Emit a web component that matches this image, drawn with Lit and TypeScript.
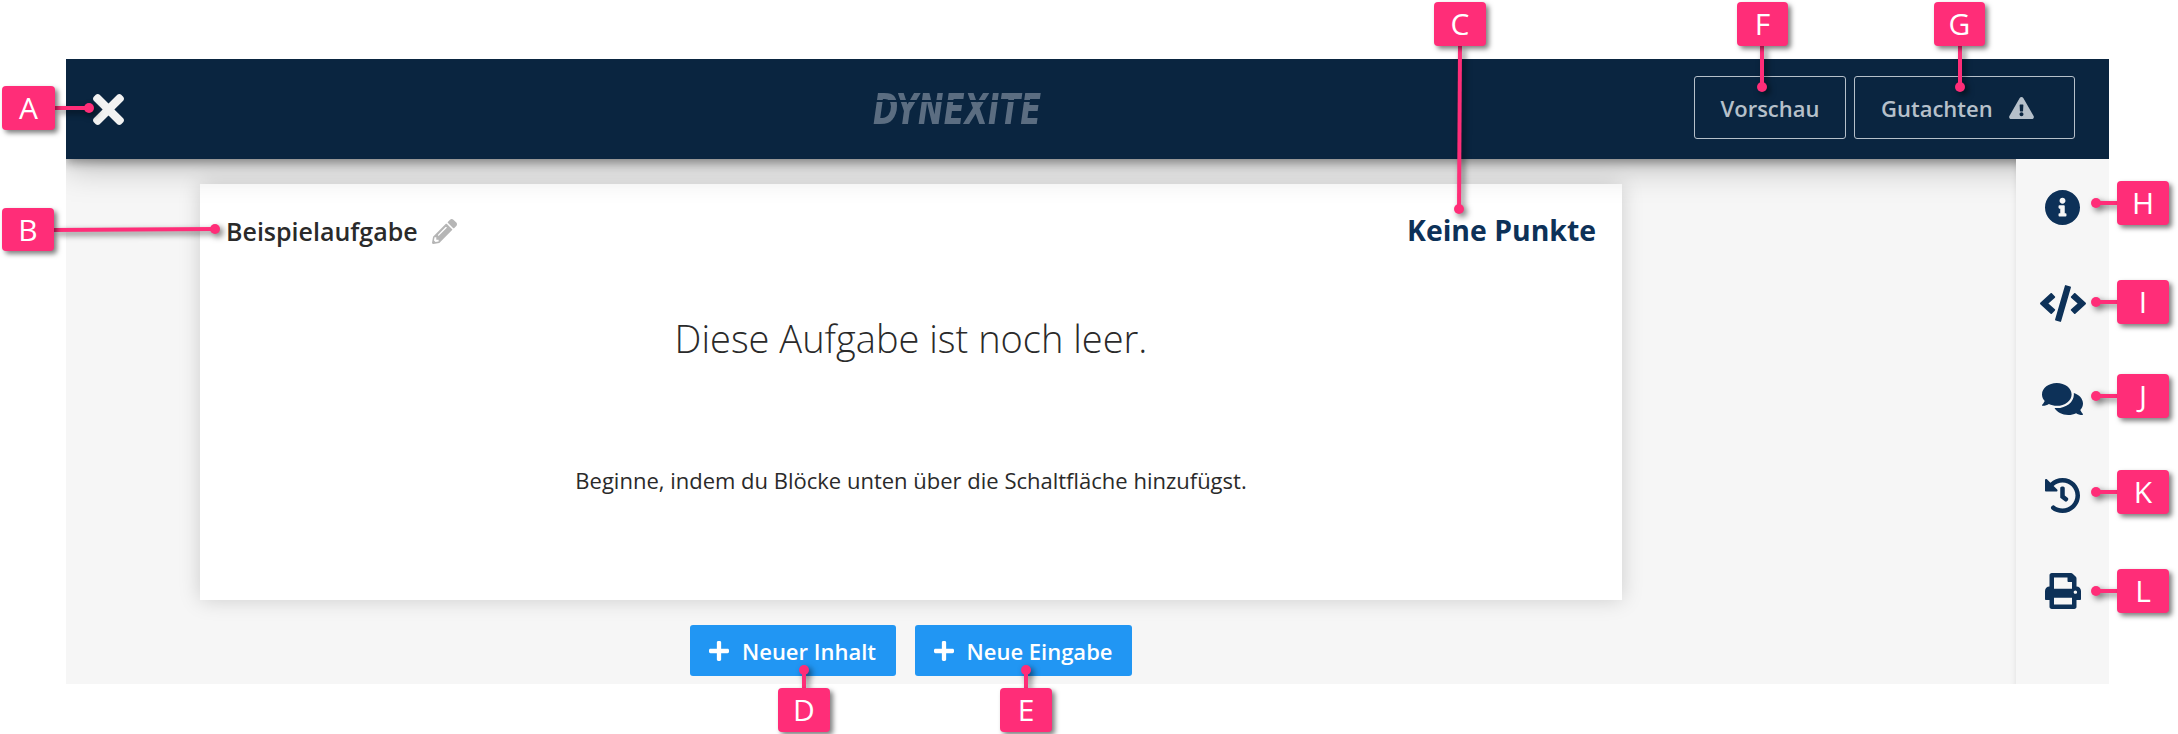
import { LitElement, html, css, svg } from "lit";
import { customElement } from "lit/decorators.js";

const P = {
  times: "M242.72 256l100.07-100.07c12.28-12.28 12.28-32.19 0-44.48l-22.24-22.24c-12.28-12.28-32.19-12.28-44.48 0L176 189.28 75.93 89.21c-12.28-12.28-32.19-12.28-44.48 0L9.21 111.45c-12.28 12.28-12.28 32.19 0 44.48L109.28 256 9.21 356.07c-12.28 12.28-12.28 32.19 0 44.48l22.24 22.24c12.28 12.28 32.2 12.28 44.48 0L176 322.72l100.07 100.07c12.28 12.28 32.2 12.28 44.48 0l22.24-22.24c12.28-12.28 12.28-32.19 0-44.48L242.72 256z",
  pencil: "M497.9 142.1l-46.1 46.1c-4.7 4.7-12.3 4.7-17 0l-111-111c-4.7-4.7-4.7-12.3 0-17l46.1-46.1c18.7-18.7 49.1-18.7 67.9 0l60.1 60.1c18.8 18.7 18.8 49.1 0 67.9zM284.2 99.8L21.6 362.4.4 483.9c-2.9 16.4 11.4 30.6 27.8 27.8l121.5-21.3 262.6-262.6c4.7-4.7 4.7-12.3 0-17l-111-111c-4.8-4.7-12.4-4.7-17.1 0zM124.1 339.9c-5.5-5.5-5.5-14.3 0-19.8l154-154c5.5-5.5 14.3-5.5 19.8 0s5.5 14.3 0 19.8l-154 154c-5.5 5.5-14.3 5.5-19.8 0zM88 424h48v36.3l-64.5 11.3-31.1-31.1L51.7 376H88v48z",
  warn: "M569.517 440.013C587.975 472.007 564.806 512 527.94 512H48.054c-36.937 0-59.999-40.055-41.577-71.987L246.423 23.985c18.467-32.009 64.72-31.951 83.154 0l239.94 416.028zM288 354c-25.405 0-46 20.595-46 46s20.595 46 46 46 46-20.595 46-46-20.595-46-46-46zm-43.673-165.346l7.418 136c.347 6.364 5.609 11.346 11.982 11.346h48.546c6.373 0 11.635-4.982 11.982-11.346l7.418-136c.375-6.874-5.098-12.654-11.982-12.654h-63.383c-6.884 0-12.356 5.78-11.981 12.654z",
  info: "M256 8C119.043 8 8 119.083 8 256c0 136.997 111.043 248 248 248s248-111.003 248-248C504 119.083 392.957 8 256 8zm0 110c23.196 0 42 18.804 42 42s-18.804 42-42 42-42-18.804-42-42 18.804-42 42-42zm56 254c0 6.627-5.373 12-12 12h-88c-6.627 0-12-5.373-12-12v-24c0-6.627 5.373-12 12-12h12v-64h-12c-6.627 0-12-5.373-12-12v-24c0-6.627 5.373-12 12-12h64c6.627 0 12 5.373 12 12v100h12c6.627 0 12 5.373 12 12v24z",
  code: "M278.9 511.5l-61-17.7c-6.4-1.8-10-8.5-8.2-14.9L346.2 8.7c1.8-6.4 8.5-10 14.9-8.2l61 17.7c6.4 1.8 10 8.5 8.2 14.9L293.8 503.3c-1.9 6.4-8.5 10.1-14.9 8.2zm-114-112.2l43.5-46.4c4.6-4.9 4.3-12.7-.8-17.2L117 256l90.6-79.7c5.1-4.5 5.5-12.3.8-17.2l-43.5-46.4c-4.5-4.8-12.1-5.1-17-.5L3.8 247.2c-5.1 4.7-5.1 12.8 0 17.5l144.1 135.1c4.9 4.6 12.5 4.4 17-.5zm327.2.6l144.1-135.1c5.1-4.7 5.1-12.8 0-17.5L492.1 112.1c-4.8-4.5-12.4-4.3-17 .5L431.6 159c-4.6 4.9-4.3 12.7.8 17.2L523 256l-90.6 79.7c-5.1 4.5-5.5 12.3-.8 17.2l43.5 46.4c4.5 4.9 12.1 5.1 17 .6z",
  comments: "M416 192c0-88.4-93.1-160-208-160S0 103.6 0 192c0 34.3 14.1 65.9 38 92-13.4 30.2-35.5 54.2-35.8 54.5-2.2 2.3-2.8 5.7-1.5 8.7S4.8 352 8 352c36.6 0 66.9-12.3 88.7-25 32.2 15.7 70.3 25 111.3 25 114.9 0 208-71.6 208-160zm122 220c23.9-26 38-57.7 38-92 0-66.9-53.5-124.2-129.3-148.1.9 6.6 1.3 13.3 1.3 20.1 0 105.9-107.7 192-240 192-10.8 0-21.3-.8-31.7-1.9C207.8 439.6 281.8 480 368 480c41 0 79.1-9.2 111.3-25 21.8 12.7 52.1 25 88.7 25 3.2 0 6.1-1.9 7.3-4.8 1.3-2.9.7-6.3-1.5-8.7-.3-.3-22.4-24.2-35.8-54.5z",
  history: "M504 255.531c.253 136.64-111.18 248.372-247.82 248.468-59.015.042-113.223-20.53-155.822-54.911-11.077-8.94-11.905-25.541-1.839-35.607l11.267-11.267c8.609-8.609 22.353-9.551 31.891-1.984C173.062 425.135 212.781 440 256 440c101.705 0 184-82.311 184-184 0-101.705-82.311-184-184-184-48.814 0-93.149 18.969-126.068 49.932l50.754 50.754c10.08 10.08 2.941 27.314-11.313 27.314H24c-8.837 0-16-7.163-16-16V38.627c0-14.254 17.234-21.393 27.314-11.314l49.372 49.372C129.209 34.136 189.552 8 256 8c136.81 0 247.747 110.78 248 247.531zm-180.912 78.784l9.823-12.63c8.138-10.463 6.253-25.542-4.21-33.679L288 256.349V152c0-13.255-10.745-24-24-24h-16c-13.255 0-24 10.745-24 24v135.651l65.409 50.874c10.463 8.137 25.541 6.253 33.679-4.21z",
  print: "M448 192V77.25c0-8.49-3.37-16.62-9.37-22.63L393.37 9.37c-6-6-14.14-9.37-22.63-9.37H96C78.33 0 64 14.33 64 32v160c-35.35 0-64 28.65-64 64v112c0 8.84 7.16 16 16 16h48v96c0 17.67 14.33 32 32 32h320c17.67 0 32-14.33 32-32v-96h48c8.84 0 16-7.16 16-16V256c0-35.35-28.65-64-64-64zm-64 256H128v-96h256v96zm0-224H128V64h192v48c0 8.84 7.16 16 16 16h48v96zm48 72c-13.25 0-24-10.75-24-24 0-13.26 10.75-24 24-24s24 10.74 24 24c0 13.25-10.75 24-24 24z",
  plus: "M416 208H272V64c0-17.67-14.33-32-32-32h-32c-17.67 0-32 14.33-32 32v144H32c-17.67 0-32 14.33-32 32v32c0 17.67 14.33 32 32 32h144v144c0 17.67 14.33 32 32 32h32c17.67 0 32-14.33 32-32V304h144c17.67 0 32-14.33 32-32v-32c0-17.67-14.33-32-32-32z",
};

const icon = (cls: string, vb: string, d: string) =>
  html`<svg class="ic ${cls}" viewBox=${vb} aria-hidden="true"><path fill="currentColor" d=${d}></path></svg>`;

const LABELS: [string, number, number, number, number][] = [
  ["A", 2, 86, 53, 44], ["B", 2, 208, 52, 43], ["C", 1434, 2, 52, 44],
  ["D", 778, 688, 52, 44], ["E", 1000, 688, 52, 44], ["F", 1737, 2, 51, 44],
  ["G", 1934, 2, 51, 44], ["H", 2117, 181, 52, 44], ["I", 2117, 280, 52, 44],
  ["J", 2117, 374, 52, 44], ["K", 2117, 470, 52, 44], ["L", 2117, 569, 52, 44],
];
const LINES: [number, number, number, number][] = [
  [55, 108, 89, 108], [54, 230, 215, 229], [1460, 46, 1459, 209],
  [804, 688, 804, 670], [1026, 688, 1026, 670], [1762, 46, 1762, 87],
  [1960, 46, 1960, 87], [2117, 203, 2096, 203], [2117, 302, 2096, 302],
  [2117, 396, 2096, 396], [2117, 492, 2096, 492], [2117, 591, 2096, 591],
];

@customElement("app-root")
export class AppRoot extends LitElement {
  static styles = css`
    :host { display: block; position: relative; width: 2178px; height: 734px; overflow: hidden; background: #fff;
      font-family: "Open Sans", "Noto Sans", sans-serif; }
    .page { padding: 59px 69px 0 66px; }
    .frame { position: relative; overflow: hidden; height: 625px; display: flex; flex-direction: column; }
    .ic { display: block; flex: none; }
    header { position: relative; z-index: 2; flex: none; height: 100px; background: #0a2540; display: flex; align-items: center;
      padding-left: 27px; box-shadow: 0 3px 10px rgba(0,0,0,.38), 0 8px 32px rgba(0,0,0,.25); }
    .close { width: 31px; height: 31px; color: #f2f2f2; }
    .logo { position: relative; margin-left: 749px; width: 169px; height: 32px; }
    .logo span { display: block; font: italic 700 43px/32px "DejaVu Sans", sans-serif; color: #5b6d81;
      transform-origin: 0 50%; transform: scaleX(.71); white-space: nowrap; }
    .logo i { position: absolute; left: 0; right: 0; top: 7px; height: 1.5px; background: #0a2540; }
    .actions { margin-left: auto; margin-right: 34px; margin-bottom: 3px; display: flex; gap: 8px; }
    .hbtn { height: 63px; box-sizing: border-box; border: 1px solid #b6c0ca; border-radius: 3px; display: flex; align-items: center;
      color: #b6c0ca; font-size: 22px; font-weight: 600; }
    .hbtn.v { width: 152px; justify-content: center; }
    .hbtn.g { width: 221px; padding-left: 26px; gap: 16px; }
    .warn { width: 25px; height: 22px; }
    .body { flex: 1; display: flex; min-height: 0; }
    main { flex: 1; min-width: 0; background: #f6f6f6; padding: 25px 394px 0 134px; box-shadow: inset -6px 0 6px -6px rgba(0,0,0,.1); display: flex; flex-direction: column; }
    .card { height: 416px; flex: none; background: #fff; box-shadow: 0 0 20px rgba(0,0,0,.17); box-sizing: border-box; padding: 31px 26px 0 26px; display: flex; flex-direction: column; }
    .top { display: flex; justify-content: space-between; align-items: center; height: 30px; }
    .name { display: flex; align-items: center; gap: 14px; font-size: 25px; font-weight: 600; color: #2a2a2a; margin-top: 2px; }
    .pencil { width: 25px; height: 25px; color: #b5b5b5; }
    .pts { font-size: 28.4px; font-weight: 700; color: #0d3158; }
    h1 { margin: 67px 0 0; text-align: center; font-size: 38px; font-weight: 300; line-height: 52px; color: #2a2a2a; }
    p { margin: 101px 0 0; text-align: center; font-size: 22px; line-height: 30px; color: #2a2a2a; }
    .adds { display: flex; justify-content: center; gap: 19px; margin-top: 25px; }
    .add { height: 51px; box-sizing: border-box; background: #2196f3; color: #fff; border-radius: 3px; display: flex; align-items: center;
      padding: 0 19.5px; gap: 12.5px; font-size: 22px; font-weight: 600; }
    .plus { width: 20px; height: 20px; }
    aside { position: relative; z-index: 3; flex: none; width: 93px; background: #f6f6f6; display: flex; flex-direction: column; align-items: center; color: #0d3158; }
    .slot { height: 96px; flex: none; display: flex; align-items: center; justify-content: center; }
    .i-info { width: 35px; height: 35px; }
    .i-code { width: 46px; height: 37px; }
    .i-comments { width: 41px; height: 32px; }
    .i-history { width: 35px; height: 35px; }
    .i-print { width: 36px; height: 36px; }
    .leaders { position: absolute; inset: 0; width: 2178px; height: 734px; z-index: 5; pointer-events: none; filter: drop-shadow(3px 3px 3px rgba(0,0,0,.55)); }
    .tag { position: absolute; z-index: 6; background: #ff2d78; color: #fff; border-radius: 4px; display: flex; align-items: center; justify-content: center;
      font-size: 30px; line-height: 1; box-shadow: 3px 3px 5px rgba(0,0,0,.5); }
  `;

  render() {
    return html`
      <div class="page">
        <div class="frame">
          <header>
            ${icon("close", "0 80 352 352", P.times)}
            <div class="logo"><span>DYNEXITE</span><i></i></div>
            <div class="actions">
              <div class="hbtn v">Vorschau</div>
              <div class="hbtn g">Gutachten ${icon("warn", "0 0 576 512", P.warn)}</div>
            </div>
          </header>
          <div class="body">
            <main>
              <section class="card">
                <div class="top">
                  <div class="name">Beispielaufgabe ${icon("pencil", "0 0 512 512", P.pencil)}</div>
                  <div class="pts">Keine Punkte</div>
                </div>
                <h1>Diese Aufgabe ist noch leer.</h1>
                <p>Beginne, indem du Blöcke unten über die Schaltfläche hinzufügst.</p>
              </section>
              <div class="adds">
                <div class="add">${icon("plus", "0 32 448 448", P.plus)}Neuer Inhalt</div>
                <div class="add">${icon("plus", "0 32 448 448", P.plus)}Neue Eingabe</div>
              </div>
            </main>
            <aside>
              <div class="slot">${icon("i-info", "8 8 496 496", P.info)}</div>
              <div class="slot">${icon("i-code", "0 0 640 512", P.code)}</div>
              <div class="slot">${icon("i-comments", "0 32 576 448", P.comments)}</div>
              <div class="slot">${icon("i-history", "8 8 496 496", P.history)}</div>
              <div class="slot">${icon("i-print", "0 0 512 512", P.print)}</div>
            </aside>
          </div>
        </div>
      </div>
      <svg class="leaders" viewBox="0 0 2178 734">
        ${LINES.map(([x1, y1, x2, y2]) => svg`
          <line x1=${x1} y1=${y1} x2=${x2} y2=${y2} stroke="#ff2d78" stroke-width="4"></line>
          <circle cx=${x2} cy=${y2} r="5" fill="#ff2d78"></circle>`)}
      </svg>
      ${LABELS.map(([t, x, y, w, h]) => html`<div class="tag" style="left:${x}px;top:${y}px;width:${w}px;height:${h}px">${t}</div>`)}
    `;
  }
}
